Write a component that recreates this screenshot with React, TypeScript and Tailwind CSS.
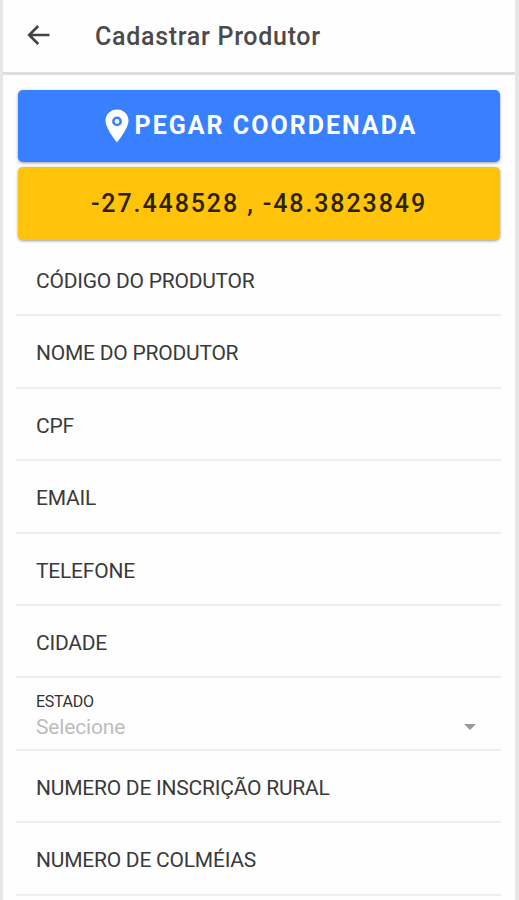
import { useState } from "react";

const fields = [
    { label: "CÓDIGO DO PRODUTOR" },
    { label: "NOME DO PRODUTOR" },
    { label: "CPF" },
    { label: "EMAIL" },
    { label: "TELEFONE" },
    { label: "CIDADE" },
    { label: "ESTADO", placeholder: "Selecione" },
    { label: "NUMERO DE INSCRIÇÃO RURAL" },
    { label: "NUMERO DE COLMÉIAS" },
];

function ArrowBack() {
    return (
        <svg viewBox="0 0 24 22" className="h-[22px] w-6" fill="none" stroke="#424242" strokeWidth="2.6">
            <path d="M23.5 10H3.500M12.200 1L3.200 10l9 9" />
        </svg>
    );
}

function Pin() {
    return (
        <svg viewBox="0 0 24 34" className="h-[34px] w-6" fill="white">
            <path
                fillRule="evenodd"
                d="M12 .5C5.600.5.5 5.400.5 11.600.5 20 12 33.500 12 33.500S23.500 20 23.500 11.600C23.500 5.400 18.400.5 12 .5zm0 7a4.900 4.900 0 1 1 0 9.800 4.900 4.900 0 0 1 0-9.800z"
            />
            <circle cx="12" cy="12.400" r="2.400" />
        </svg>
    );
}

export default function App() {
    const [coords] = useState("-27.448528 , -48.3823849");

    return (
        <div className="h-[900px] w-[519px] overflow-hidden border-r-4 border-l-[3px] border-[#e6e6e6] bg-[#fefefe] font-['Roboto',sans-serif]">
            <header className="flex h-[75px] items-center border-b-[3px] border-[#dfdfdf] pl-[23px]">
                <ArrowBack />
                <h1 className="ml-[45px] pt-0.5 text-[25px] leading-8 font-medium tracking-[0.7px] whitespace-nowrap text-[#4b4b4b]">
                    Cadastrar Produtor
                </h1>
            </header>

            {/* Coordenadas */}
            <div className="mt-[15px] mr-[15px] ml-[15px] flex flex-col gap-[5px]">
                <button className="flex h-[72px] items-center justify-center gap-[6px] rounded-[5px] bg-[#3880ff] pl-1 text-[25px] font-bold tracking-[2px] whitespace-nowrap text-white shadow-[0_1px_3px_rgba(0,0,0,0.4)]">
                    <Pin />
                    <span>PEGAR COORDENADA</span>
                </button>
                <button className="h-[73px] rounded-[5px] bg-[#ffc409] text-[25px] font-medium tracking-[1.9px] whitespace-nowrap text-[#2b2208] shadow-[0_1px_3px_rgba(0,0,0,0.4)]">
                    {coords}
                </button>
            </div>

            {/* Campos do produtor */}
            <div className="mt-[4px] mr-[14px] ml-[13px] flex flex-col">
                {fields.map((field) => (
                    <div
                        key={field.label}
                        className="flex h-[72.4px] shrink-0 items-center justify-between border-b-2 border-[#efefef] pt-[3.5px] pr-[25px] pl-5"
                    >
                        {field.placeholder ? (
                            <>
                                <div className="whitespace-nowrap">
                                    <p className="pt-0.5 text-base leading-[22px] tracking-[-0.3px] text-[#333]">{field.label}</p>
                                    <p className="text-[21px] leading-[29px] tracking-[-0.15px] text-[#bdbdbd]">{field.placeholder}</p>
                                </div>
                                <svg viewBox="0 0 12 6" className="mt-[23px] h-1.5 w-3" fill="#999">
                                    <path d="M0 0h12L6 6z" />
                                </svg>
                            </>
                        ) : (
                            <label className="text-[21px] leading-7 tracking-[-0.23px] whitespace-nowrap text-[#3a3a3a]">
                                {field.label}
                            </label>
                        )}
                    </div>
                ))}
            </div>
        </div>
    );
}
